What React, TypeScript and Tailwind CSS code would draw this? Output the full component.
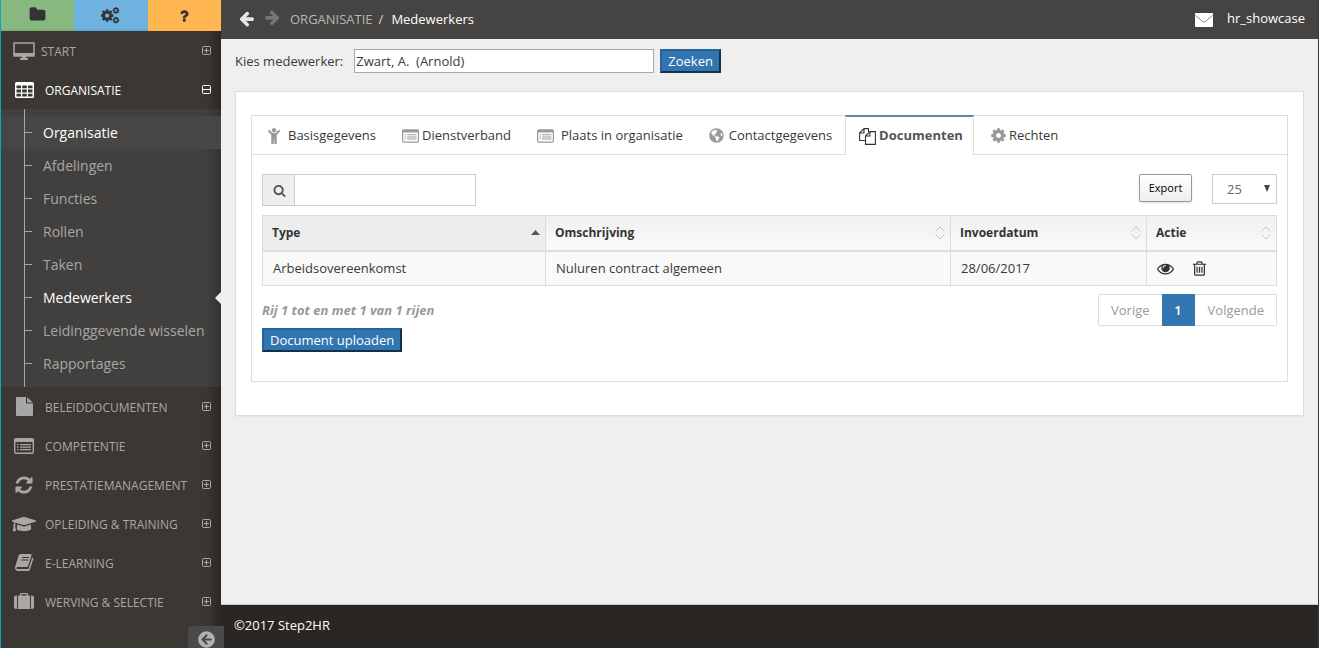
import type { ReactNode } from "react";
import clsx from "clsx";
import { FaArrowCircleLeft, FaChild, FaGlobeAmericas, FaGraduationCap } from "react-icons/fa";

const FOLDER =
  "M1728 608v704q0 92-66 158t-158 66h-1216q-92 0-158-66t-66-158v-960q0-92 66-158t158-66h320q92 0 158 66t66 158v32h672q92 0 158 66t66 158z";
const QUESTION =
  "M1088 1256v240q0 16-12 28t-28 12h-240q-16 0-28-12t-12-28v-240q0-16 12-28t28-12h240q16 0 28 12t12 28zm316-600q0 54-15.5 101t-35 76.5-55 59.5-57.5 43.5-61 35.5q-41 23-68.5 65t-27.5 67q0 17-12 32.5t-28 15.5h-240q-15 0-25.5-18.5t-10.5-37.5v-45q0-83 65-156.5t143-108.5q59-27 84-56t25-76q0-42-46.5-74t-107.5-32q-65 0-108 29-35 25-107 115-13 16-31 16-12 0-25-8l-164-125q-13-10-15.5-25t5.5-28q160-266 464-266 80 0 161 31t146 83 106 127.5 41 158.5z";
const COG =
  "M1152 896q0-106-75-181t-181-75-181 75-75 181 75 181 181 75 181-75 75-181zm512-109v222q0 12-8 23t-20 13l-185 28q-19 54-39 91 35 50 107 138 10 12 10 25t-9 23q-27 37-99 108t-94 71q-12 0-26-9l-138-108q-44 23-91 38-16 136-29 186-7 28-36 28h-222q-14 0-24.5-8.5t-11.5-21.5l-28-184q-49-16-90-37l-141 107q-10 9-25 9-14 0-25-11-126-114-165-168-7-10-7-23 0-12 8-23 15-21 51-66.5t54-70.5q-27-50-41-99l-183-27q-13-2-21-12.5t-8-23.5v-222q0-12 8-23t19-13l186-28q14-46 39-92-40-57-107-138-10-12-10-24 0-10 9-23 26-36 98.5-107.5t94.5-71.5q13 0 26 10l138 107q44-23 91-38 16-136 29-186 7-28 36-28h222q14 0 24.5 8.5t11.5 21.5l28 184q49 16 90 37l142-107q9-9 24-9 13 0 25 10 129 119 165 170 7 8 7 22 0 12-8 23-15 21-51 66.5t-54 70.5q26 50 41 98l183 28q13 2 21 12.5t8 23.5z";
const ARROW =
  "M1664 896v128q0 53-32.5 90.5t-84.5 37.5h-704l293 294q38 36 38 90t-38 90l-75 76q-37 37-90 37-52 0-91-37l-651-652q-37-37-37-90 0-52 37-91l651-650q38-38 91-38 52 0 90 38l75 74q38 38 38 91t-38 91l-293 293h704q52 0 84.5 37.5t32.5 90.5z";
const REFRESH =
  "M1639 1056q0 5-1 7-64 268-268 434.5t-478 166.5q-146 0-282.5-55t-243.5-157l-129 129q-19 19-45 19t-45-19-19-45v-448q0-26 19-45t45-19h448q26 0 45 19t19 45-19 45l-137 137q71 66 161 102t187 36q134 0 250-65t186-179q11-17 53-117 8-23 30-23h192q13 0 22.5 9.5t9.5 22.5zm25-800v448q0 26-19 45t-45 19h-448q-26 0-45-19t-19-45 19-45l138-138q-148-137-349-137-134 0-250 65t-186 179q-11 17-53 117-8 23-30 23h-199q-13 0-22.5-9.5t-9.5-22.5v-7q65-268 270-434.5t480-166.5q146 0 284 55.5t245 156.5l130-129q19-19 45-19t45 19 19 45z";
const SEARCH =
  "M1216 832q0-185-131.5-316.5t-316.5-131.5-316.5 131.5-131.5 316.5 131.5 316.5 316.5 131.5 316.5-131.5 131.5-316.5zm512 832q0 52-38 90t-90 38q-54 0-90-38l-343-342q-179 124-399 124-143 0-273.5-55.5t-225-150-150-225-55.5-273.5 55.5-273.5 150-225 225-150 273.5-55.5 273.5 55.5 225 150 150 225 55.5 273.5q0 220-124 399l343 343q37 37 37 90z";
const EYE =
  "M1664 960q-152-236-381-353 61 104 61 225 0 185-131.5 316.5t-316.5 131.5-316.5-131.5-131.5-316.5q0-121 61-225-229 117-381 353 133 205 333.5 326.5t434.5 121.5 434.5-121.5 333.5-326.5zm-720-384q0-20-14-34t-34-14q-125 0-214.5 89.5t-89.5 214.5q0 20 14 34t34 14 34-14 14-34q0-86 61-147t147-61q20 0 34-14t14-34zm848 384q0 34-20 69-140 230-376.5 368.5t-499.5 138.5-499.5-139-376.5-368q-20-35-20-69t20-69q140-229 376.5-368t499.5-139 499.5 139 376.5 368q20 35 20 69z";
const TRASH =
  "M704 736v576q0 14-9 23t-23 9h-64q-14 0-23-9t-9-23v-576q0-14 9-23t23-9h64q14 0 23 9t9 23zm256 0v576q0 14-9 23t-23 9h-64q-14 0-23-9t-9-23v-576q0-14 9-23t23-9h64q14 0 23 9t9 23zm256 0v576q0 14-9 23t-23 9h-64q-14 0-23-9t-9-23v-576q0-14 9-23t23-9h64q14 0 23 9t9 23zm128 724v-948h-896v948q0 22 7 40.5t14.5 27 10.5 8.5h832q3 0 10.5-8.5t14.5-27 7-40.5zm-672-1076h448l-48-117q-7-9-17-11h-317q-10 2-17 11zm928 32v64q0 14-9 23t-23 9h-96v948q0 83-47 143.5t-113 60.5h-832q-66 0-113-58.5t-47-141.5v-952h-96q-14 0-23-9t-9-23v-64q0-14 9-23t23-9h309l70-167q15-37 54-63t79-26h320q40 0 79 26t54 63l70 167h309q14 0 23 9t9 23z";

function Glyph({ d, className }: { d: string; className?: string }) {
  return (
    <svg viewBox="0 0 1792 1792" fill="currentColor" aria-hidden="true" className={className}>
      <path d={d} />
    </svg>
  );
}

function CogsIcon() {
  return (
    <svg width="19" height="17" viewBox="0 0 19 17" fill="currentColor" aria-hidden="true">
      <path d={COG} transform="translate(-1.2 1.2) scale(.0082)" />
      <path d={COG} transform="translate(11 -.5) scale(.0044)" />
      <path d={COG} transform="translate(11 9.2) scale(.0044)" />
    </svg>
  );
}

function DesktopIcon() {
  return (
    <svg width="22" height="18" viewBox="0 0 22 18" aria-hidden="true">
      <path d="M1 1h20v13H1z" fill="none" stroke="currentColor" strokeWidth="1.5" strokeLinejoin="round" />
      <path d="M1 11h20v3H1zM9 14h4v2h2v2H7v-2h2z" fill="currentColor" />
    </svg>
  );
}

function TableIcon() {
  return (
    <svg width="19" height="16" viewBox="0 0 19 16" fill="currentColor" fillRule="evenodd" aria-hidden="true">
      <path d="M1.500 0h16Q19 0 19 1.500v13q0 1.500-1.500 1.500h-16Q0 16 0 14.500v-13Q0 0 1.500 0zM1.500 3.500v2.800H6V3.500zm5.700 0v2.800h4.600V3.500zM13 3.500v2.800h4.500V3.500zM1.500 7.600v2.800H6V7.600zm5.700 0v2.800h4.600V7.600zM13 7.600v2.800h4.500V7.600zM1.500 11.700v2.800H6v-2.800zm5.700 0v2.800h4.600v-2.800zM13 11.700v2.800h4.500v-2.800z" />
    </svg>
  );
}

function ListIcon({ className }: { className?: string }) {
  return (
    <svg viewBox="0 0 20 16" aria-hidden="true" className={className}>
      <rect x=".7" y=".7" width="18.600" height="14.600" rx="1.300" fill="none" stroke="currentColor" strokeWidth="1.400" />
      <path d="M1 1h18v3H1zM3 6h1.500v1.200H3zm0 2.500h1.500v1.200H3zM3 11h1.500v1.200H3zM6 6h11v1.200H6zm0 2.500h11v1.200H6zM6 11h11v1.200H6z" fill="currentColor" />
    </svg>
  );
}

function FileIcon() {
  return (
    <svg width="17" height="19" viewBox="0 0 17 19" fill="currentColor" aria-hidden="true">
      <path d="M1 0h9v6.500h7V18q0 1-1 1H1q-1 0-1-1V1q0-1 1-1zM11.200.2 16.800 5.400h-5.600z" />
    </svg>
  );
}

function BookIcon() {
  return (
    <svg width="19" height="17" viewBox="0 0 19 17" aria-hidden="true">
      <path d="M5.500 0H15.500q1.500 0 1 1.500l-3.300 10.300q-.4 1.200-1.700 1.200H2.500q-1.200.2-.9 1.400.2.600 1.100.6H13.500l3.700-11.500q1.500.3 1 1.900l-3.400 10.400Q14.500 17 13.200 17H3Q.8 17 .2 15q-.4-1.600.2-3L3.600 1.500Q4 0 5.500 0z" fill="currentColor" />
      <path d="M7 3.500h7M6.300 6h7" stroke="#3b3733" strokeWidth="1.100" />
    </svg>
  );
}

function SuitcaseIcon() {
  return (
    <svg width="20" height="17" viewBox="0 0 20 17" fill="currentColor" aria-hidden="true">
      <path d="M3 2.500V16H2q-2 0-2-2V4.500q0-2 2-2zM17 2.500h1q2 0 2 2V14q0 2-2 2h-1zM6 2.500V1q0-1 1-1h6q1 0 1 1v1.500h2V16H4V2.500zm1.300 0h5.400V1.200H7.300z" />
    </svg>
  );
}

function DocsIcon() {
  return (
    <svg width="17" height="17" viewBox="0 0 17 17" fill="none" stroke="currentColor" strokeWidth="1.100" strokeLinejoin="round" aria-hidden="true">
      <path d="M6.500 12.500H.600V5L5 .600H9.500V4M5 .600V5H.600M11 3.600h5.400v12.800H6.500V8L11 3.600zV8H6.500" />
    </svg>
  );
}

function ToggleIcon({ open }: { open?: boolean }) {
  return (
    <svg width="9" height="9" viewBox="0 0 9 9" fill="none" stroke="currentColor" aria-hidden="true">
      <rect x=".5" y=".5" width="8" height="8" rx="1" />
      <path d={open ? "M1 4.500h7" : "M2 4.500h5M4.500 2v5"} />
    </svg>
  );
}

function SortIcon() {
  return (
    <svg width="10" height="14" viewBox="0 0 10 14" fill="none" stroke="#c4c4c4" aria-hidden="true">
      <path d="M.5 5.500 5 1l4.500 4.500M.5 8.500 5 13l4.500-4.500" />
    </svg>
  );
}

const subItems = [
  "Organisatie",
  "Afdelingen",
  "Functies",
  "Rollen",
  "Taken",
  "Medewerkers",
  "Leidinggevende wisselen",
  "Rapportages"
];

const modules = [
  { label: "BELEIDDOCUMENTEN", icon: <FileIcon /> },
  { label: "COMPETENTIE", icon: <ListIcon className="h-4 w-5" /> },
  { label: "PRESTATIEMANAGEMENT", icon: <Glyph d={REFRESH} className="size-5" /> },
  { label: "OPLEIDING & TRAINING", icon: <FaGraduationCap size={24} className="shrink-0" /> },
  { label: "E-LEARNING", icon: <BookIcon /> },
  { label: "WERVING & SELECTIE", icon: <SuitcaseIcon /> }
];

const tabs = [
  { label: "Basisgegevens", icon: <FaChild size={16} />, slot: "w-[20px]" },
  { label: "Dienstverband", icon: <ListIcon className="h-[14px] w-[17px]" />, slot: "w-[18px]" },
  { label: "Plaats in organisatie", icon: <ListIcon className="h-[14px] w-[17px]" />, slot: "w-[22px]" },
  { label: "Contactgegevens", icon: <FaGlobeAmericas size={15} />, slot: "w-[18px]" },
  { label: "Documenten", icon: <DocsIcon />, slot: "w-[18px]", active: true },
  { label: "Rechten", icon: <Glyph d={COG} className="size-[17px]" />, slot: "w-[17px]" }
];

function NavRow({ icon, label, open }: { icon: ReactNode; label: string; open?: boolean }) {
  return (
    <a
      href="#"
      className={clsx("flex h-[39px] items-center pr-[10px] pl-[10px] text-[12px]", open ? "text-white" : "text-[#a9a7a5]")}
    >
      <span className="flex w-[26px] justify-center">{icon}</span>
      <span className={clsx("flex-1 pt-0.5 whitespace-nowrap", label === "START" ? "pl-1" : "pl-2")}>{label}</span>
      <ToggleIcon open={open} />
    </a>
  );
}

function Sidebar() {
  return (
    <aside className="flex w-[221px] shrink-0 flex-col border-l border-[#0fa3bd] bg-[#3b3733] bg-linear-to-r from-transparent from-93% to-[#2a2624]">
      <div className="grid h-[31px] grid-cols-3 text-[#333]">
        <button aria-label="Map" className="flex items-center justify-center border-b-2 border-[#7fae78] bg-[#87b87f]">
          <Glyph d={FOLDER} className="size-[17px]" />
        </button>
        <button aria-label="Instellingen" className="flex items-center justify-center border-b-2 border-[#66a7d5] bg-[#6fb3e0] pt-0.5">
          <CogsIcon />
        </button>
        <button aria-label="Help" className="flex items-center justify-center bg-[#ffb752]">
          <Glyph d={QUESTION} className="size-4" />
        </button>
      </div>
      <nav>
        <NavRow icon={<DesktopIcon />} label="START" />
        <NavRow icon={<TableIcon />} label="ORGANISATIE" open />
        <div className="bg-[#41403e] bg-linear-to-r from-transparent from-93% to-[#343331] pl-[23px]">
          <ul className="border-l border-[#a9a7a5] py-[7px]">
            {subItems.map((item, i) => (
              <li
                key={item}
                className={clsx("flex h-[33px] items-center", i === 0 && "-ml-6 border-l-0 bg-[#474644] pl-[23px]")}
              >
                {i === 0 && <span className="h-full w-px bg-[#a9a7a5]" />}
                <span className="mr-[11px] h-px w-[7px] bg-[#a9a7a5]" />
                <a
                  href="#"
                  className={clsx(
                    "flex-1 text-[14px] whitespace-nowrap",
                    item === "Organisatie" || item === "Medewerkers" ? "font-medium text-white" : "text-[#a9a7a5]"
                  )}
                >
                  {item}
                </a>
                {item === "Medewerkers" && (
                  <svg width="6" height="12" viewBox="0 0 6 12" aria-hidden="true">
                    <path d="M6 0v12L0 6z" fill="#efefef" />
                  </svg>
                )}
              </li>
            ))}
          </ul>
        </div>
        {modules.map((m) => (
          <NavRow key={m.label} icon={m.icon} label={m.label} />
        ))}
      </nav>
      <button
        aria-label="Menu inklappen"
        className="relative z-10 mt-auto -mr-[3px] flex h-[22px] w-9 items-end justify-center self-end rounded-tl bg-[#4a4a4a] text-[#b3b1af]"
      >
        <FaArrowCircleLeft size={17} />
      </button>
    </aside>
  );
}

function TopBar() {
  return (
    <header className="flex h-[39px] items-center bg-[#464442] pr-[13px] pl-[17px] text-[13px]">
      <button aria-label="Terug" className="mr-[9px] pb-0.5 text-[#e6e6e6]">
        <Glyph d={ARROW} className="size-[17px]" />
      </button>
      <button aria-label="Vooruit" className="mr-[9px] pb-0.5 text-[#777573]">
        <Glyph d={ARROW} className="size-[17px] rotate-180" />
      </button>
      <a href="#" className="text-[#b8b6b4]">ORGANISATIE</a>
      <span className="mr-2 ml-[6px] text-[#dddbd9]">/</span>
      <span className="text-white">Medewerkers</span>
      <a href="#" aria-label="Berichten" className="mr-[14px] ml-auto">
        <svg width="18" height="14" viewBox="0 0 18 14" aria-hidden="true">
          <rect width="18" height="14" rx="1" fill="#fff" />
          <path d="M.5 2.500 8 8.800q1 .8 2 0l7.500-6.300" fill="none" stroke="#888" />
        </svg>
      </a>
      <a href="#" className="pb-0.5 text-white">hr_showcase</a>
    </header>
  );
}

function DocumentTable() {
  const head = "h-[35px] border border-b-2 border-[#ddd] px-[9px] text-left text-[12px] font-bold";
  const cell = "h-[35px] border border-[#ddd] px-[10px]";
  return (
    <table className="mt-[9px] w-full table-fixed border-collapse bg-[#f9f9f9]">
      <thead className="bg-linear-to-b from-[#f0f0f0] to-[#fafafa] text-[#333]">
        <tr>
          <th className={clsx(head, "w-[283px] bg-[#ededed]")}>
            <div className="-mr-1 flex items-center justify-between">
              Type
              <svg width="9" height="5" viewBox="0 0 9 5" aria-hidden="true">
                <path d="M0 5 4.500 0 9 5z" fill="#555" />
              </svg>
            </div>
          </th>
          <th className={head}>
            <div className="-mr-1 flex items-center justify-between">Omschrijving <SortIcon /></div>
          </th>
          <th className={clsx(head, "w-[196px]")}>
            <div className="-mr-1 flex items-center justify-between">Invoerdatum <SortIcon /></div>
          </th>
          <th className={clsx(head, "w-[130px]")}>
            <div className="-mr-1 flex items-center justify-between">Actie <SortIcon /></div>
          </th>
        </tr>
      </thead>
      <tbody>
        <tr>
          <td className={cell}>Arbeidsovereenkomst</td>
          <td className={cell}>Nuluren contract algemeen</td>
          <td className={cell}>28/06/2017</td>
          <td className={cell}>
            <div className="flex items-center gap-[17px] text-[#333]">
              <button aria-label="Bekijken">
                <Glyph d={EYE} className="size-[17px]" />
              </button>
              <button aria-label="Verwijderen">
                <Glyph d={TRASH} className="size-[17px]" />
              </button>
            </div>
          </td>
        </tr>
      </tbody>
    </table>
  );
}

const blueButton = "h-6 border-2 border-t-[#2a6496] border-r-[#15304a] border-b-[#15304a] border-l-[#2a6496] bg-[#3276b1] px-[6px] leading-5 text-white";

export default function App() {
  return (
    <div className="flex min-h-screen border-r border-[#3a3a3a] bg-[#efefef] font-['Open_Sans',sans-serif] text-[13px] text-[#393939]">
      <Sidebar />
      <div className="flex min-w-0 flex-1 flex-col">
        <TopBar />
        <main className="flex-1 px-[14px] pt-[10px] pb-8">
          <form className="flex items-center">
            <label htmlFor="employee" className="mr-[11px] pt-0.5">Kies medewerker:</label>
            <input
              id="employee"
              defaultValue={"Zwart, A.  (Arnold)"}
              className="mr-[6px] h-6 w-[300px] border border-[#a9a9a9] bg-white px-px"
            />
            <button type="button" className={blueButton}>Zoeken</button>
          </form>

          <section className="mt-[18px] border border-[#ddd] bg-white px-[15px] pt-[23px] pb-[33px] shadow-xs">
            <div className="border border-[#ddd] pb-[29px]">
              <div role="tablist" className="-mt-px flex h-10">
                {tabs.map((tab, i) => (
                  <button
                    key={tab.label}
                    role="tab"
                    aria-selected={!!tab.active}
                    className={clsx(
                      "flex items-center whitespace-nowrap border-[#ddd]",
                      tab.active && "border-x border-t-2 border-t-[#57889c] pr-[10px] pl-[13px] font-bold text-[#555]",
                      !tab.active && "border-b pt-[2px]",
                      !tab.active && i === 0 && "pr-[13px] pl-[14px]",
                      !tab.active && i > 0 && i < 5 && "px-[13px]",
                      i === 5 && "pl-4"
                    )}
                  >
                    <span className={clsx("mr-[2px] flex", tab.slot, tab.active ? "text-[#333]" : "text-[#999]")}>
                      {tab.icon}
                    </span>
                    {tab.label}
                  </button>
                ))}
                <div className="flex-1 border-b border-[#ddd]" />
              </div>

              <div className="px-[10px] pt-[19px]">
                <div className="flex items-start">
                  <label className="flex h-8 w-[214px] border border-[#ccc]">
                    <span className="flex w-8 shrink-0 items-center justify-center border-r border-[#ccc] bg-[#eee] pl-0.5 text-[#555]">
                      <Glyph d={SEARCH} className="size-[13px]" />
                    </span>
                    <input type="search" aria-label="Zoeken in documenten" className="min-w-0 flex-1 bg-white px-2 outline-none" />
                  </label>
                  <button className="mr-5 ml-auto h-7 w-[53px] rounded-xs border border-[#999] bg-linear-to-b from-white to-[#eee] text-[11px] text-black shadow-sm">
                    Export
                  </button>
                  <span className="relative">
                    <select
                      aria-label="Aantal rijen"
                      defaultValue="25"
                      className="h-[30px] w-[65px] appearance-none border border-[#ccc] bg-white pt-0.5 pl-[14px] text-[#666]"
                    >
                      <option>10</option>
                      <option>25</option>
                      <option>50</option>
                    </select>
                    <svg width="6" height="7" viewBox="0 0 6 7" aria-hidden="true" className="pointer-events-none absolute top-[11px] right-[7px]">
                      <path d="M0 0h6L3 7z" fill="#444" />
                    </svg>
                  </span>
                </div>

                <DocumentTable />

                <div className="mt-2 flex justify-between">
                  <p className="pt-2 leading-4 font-bold text-[#999] italic">Rij 1 tot en met 1 van 1 rijen</p>
                  <div className="flex h-8 text-[#999]">
                    <button className="rounded-l-xs border border-r-0 border-[#ddd] px-3 pt-0.5">Vorige</button>
                    <button className="w-[33px] bg-[#3276b1] pt-0.5 font-semibold text-white">1</button>
                    <button className="rounded-r-xs border border-l-0 border-[#ddd] pt-0.5 pr-3 pl-[13px]">Volgende</button>
                  </div>
                </div>
                <button className={clsx("mt-[2px] block", blueButton)}>Document uploaden</button>
              </div>
            </div>
          </section>
        </main>
        <footer className="h-11 border-t border-[#c8c8c8] bg-[#2a2624] px-[13px] pt-[10px] leading-5 text-white">
          ©2017 Step2HR
        </footer>
      </div>
    </div>
  );
}
